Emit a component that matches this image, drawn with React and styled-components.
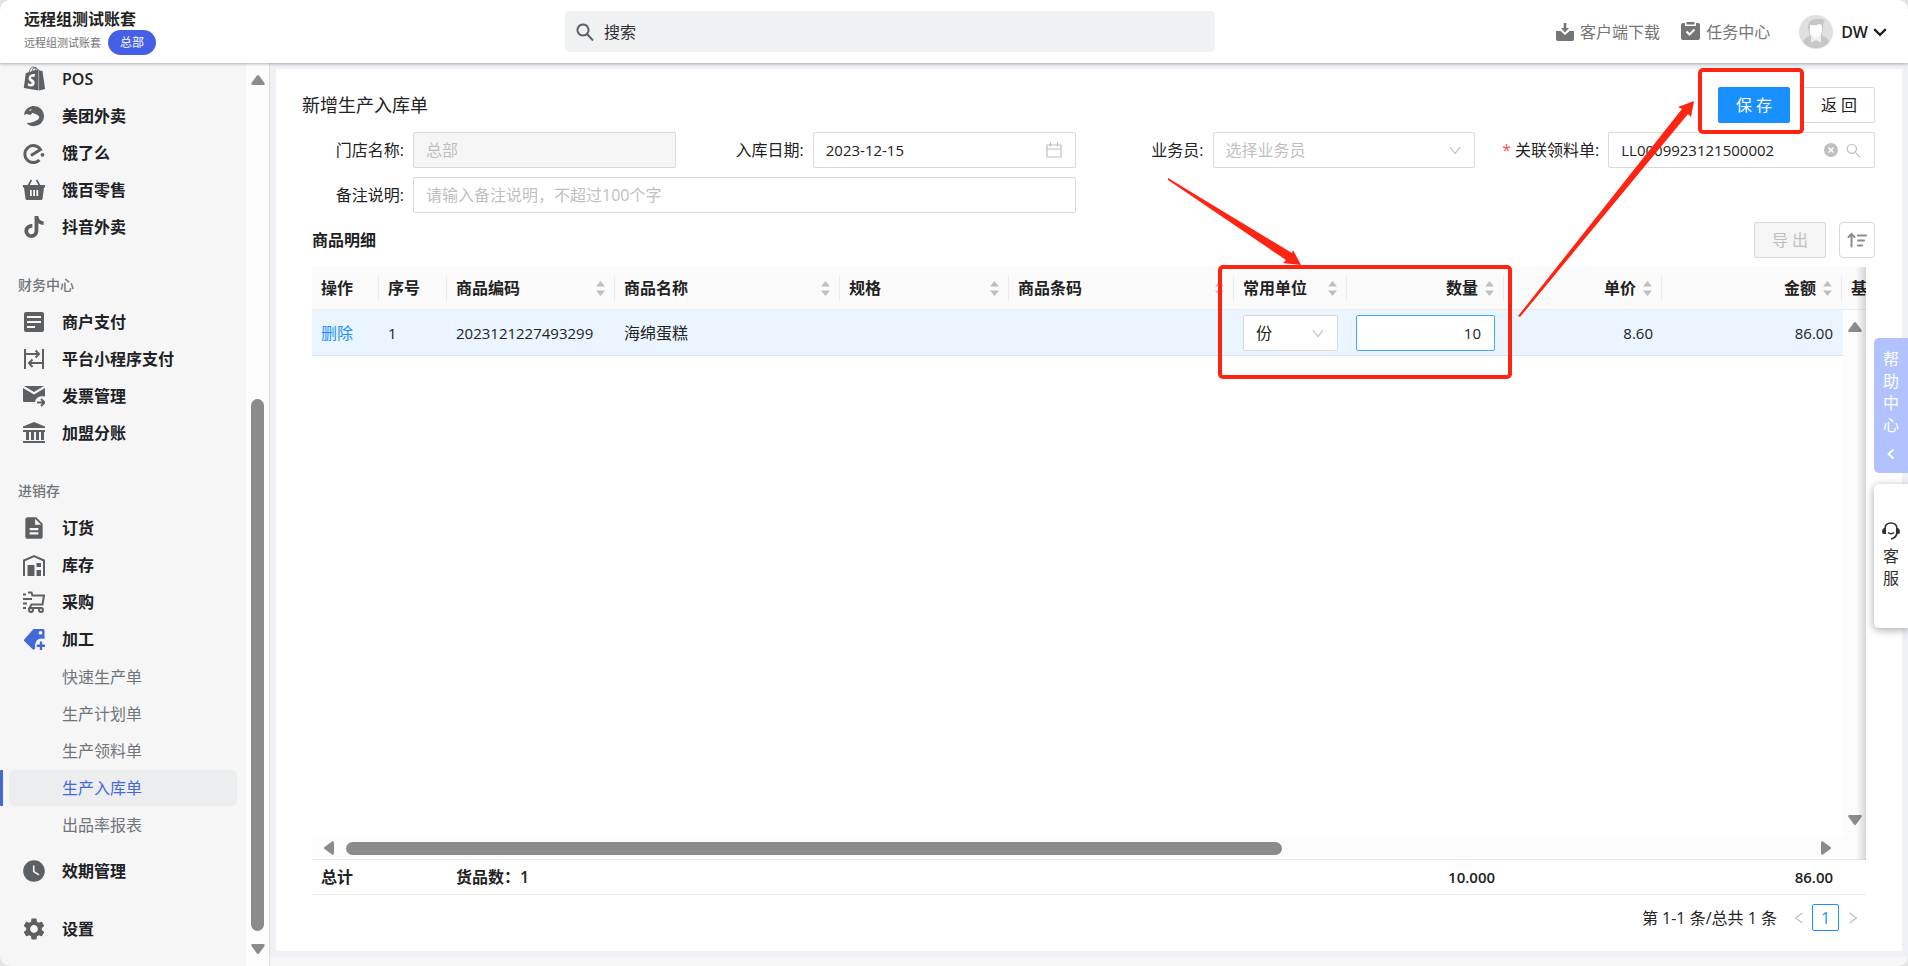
import React, { useState } from 'react'
import styled, { createGlobalStyle } from "styled-components";
import { FaShopify, FaTiktok } from "react-icons/fa6";
import { MdSettings, MdWatchLater, MdDescription } from "react-icons/md";

const GlobalStyle = createGlobalStyle`
    * {
        box-sizing: border-box;
    }

    body {
        margin: 0;
        background: #e4e4e4;
        color: #222222;
        font-family: "Open Sans", "Noto Sans CJK SC", sans-serif;
        font-size: 16px;
        line-height: 24px;
    }

    button, input, select {
        font: inherit;
        color: inherit;
    }
`;

const Page = styled.div`
    position: relative;
    display: flex;
    flex-direction: column;
    height: 100vh;
    overflow: hidden;
    background: #f6f6f6;
    border-radius: 10px;
`;

/* ---------- top bar ---------- */

const TopBar = styled.header`
    position: relative;
    z-index: 1;
    flex: none;
    display: grid;
    grid-template-columns: 565px minmax(200px, 650px) 1fr;
    align-items: center;
    height: 63px;
    background: #ffffff;
    box-shadow: 0 1px 3px rgba(0, 0, 0, 0.3);
`;

const Brand = styled.div`
    padding-left: 24px;

    h1 {
        margin: 0;
        font-size: 16px;
        line-height: 22px;
        font-weight: 600;
    }
`;

const BrandSub = styled.div`
    display: flex;
    align-items: center;
    gap: 7px;
    font-size: 11px;
    color: #757575;
`;

const Badge = styled.span`
    padding: 0 12px;
    border-radius: 13px;
    background: #4560e6;
    color: #ffffff;
    font-size: 12px;
    line-height: 25px;
`;

const SearchBox = styled.label`
    display: flex;
    align-items: center;
    gap: 10px;
    height: 41px;
    padding: 0 11px;
    border-radius: 5px;
    background: #f0f1f3;
    color: #5f6368;

    input {
        flex: 1;
        border: 0;
        padding: 0;
        outline: 0;
        background: none;

        &::placeholder {
            color: #303030;
            opacity: 1;
        }
    }
`;

const TopLinks = styled.nav`
    display: flex;
    justify-content: flex-end;
    align-items: center;
    padding-right: 21px;
    color: #757575;
`;

const TopLink = styled.a`
    display: flex;
    align-items: center;
    gap: 6px;
    margin-right: 21px;
    color: inherit;
    text-decoration: none;
`;

const UserButton = styled.button`
    display: flex;
    align-items: center;
    gap: 5px;
    margin-left: 8px;
    padding: 0;
    border: 0;
    background: none;
    color: #222222;
    font-weight: 600;

    span {
        margin-left: 3px;
    }
`;

/* ---------- side menu ---------- */

const Body = styled.div`
    flex: 1;
    display: flex;
    min-height: 0;
`;

const Sidebar = styled.aside`
    flex: none;
    display: flex;
    width: 270px;
    border-right: 1px solid #dcdee3;
`;

const Menu = styled.nav`
    flex: 1;
    margin-top: -3px;
`;

const GroupTitle = styled.div`
    padding: 22px 18px 0;
    height: 58px;
    font-size: 14px;
    line-height: 36px;
    font-weight: 500;
    color: #70757a;
`;

const MenuLink = styled.a`
    display: flex;
    align-items: center;
    gap: 17px;
    height: 37px;
    margin-top: ${props => props.$gap || 0}px;
    padding-left: 23px;
    color: #202124;
    font-weight: 600;
    text-decoration: none;

    svg {
        flex: none;
        color: ${props => props.$active ? "#4468d8" : "#5c6063"};
    }
`;

const Slot = styled.span`
    display: flex;
    justify-content: center;
    width: 22px;
`;

const SubMenu = styled.div`
    padding-top: 2px;
`;

const SubLink = styled.a`
    display: block;
    height: 36px;
    margin: 0 9px 1px 0;
    padding-left: 59px;
    border-left: 3px solid transparent;
    color: #70757a;
    line-height: 36px;
    text-decoration: none;

    &[aria-current="page"] {
        padding-left: 6px;
        border-left-color: #4468d8;
        border-radius: 1px;
        color: #4468d8;

        span {
            display: block;
            padding-left: 53px;
            border-radius: 5px;
            background: #ecedef;
        }
    }
`;

/* ---------- scroll bars ---------- */

const Scrollbar = styled.div`
    flex: none;
    display: flex;
    flex-direction: ${props => props.$horizontal ? "row" : "column"};
    align-items: center;
    justify-content: space-between;
    ${props => props.$horizontal ? "height: 22px" : "width: 23px"};
    padding: ${props => props.$pad || "12px"};
    background: #fcfcfc;

    svg {
        flex: none;
    }
`;

const SideTrack = styled.div`
    flex: 1;
    display: flex;
    flex-direction: column;
    justify-content: flex-end;
    width: 13px;
    padding-bottom: 11px;

    &::after {
        content: "";
        height: 63%;
        border-radius: 7px;
        background: #8b8b8b;
    }
`;

const BottomTrack = styled.div`
    flex: 1;
    padding: 0 10px;

    &::after {
        content: "";
        display: block;
        width: 64%;
        height: 13px;
        border-radius: 7px;
        background: #8b8b8b;
    }
`;

/* ---------- document panel ---------- */

const Main = styled.main`
    flex: 1;
    display: flex;
    min-width: 0;
    margin-bottom: 9px;
    padding: 6px;
    background: #f0f1f6;
`;

const Panel = styled.section`
    flex: 1;
    display: flex;
    flex-direction: column;
    gap: 9px;
    min-width: 0;
    padding: 18px 0 20px;
    border-radius: 2px;
    background: #ffffff;
`;

const PanelHead = styled.div`
    display: flex;
    align-items: center;
    gap: ${props => props.$gap};
    padding: 0 27px 0 ${props => props.$left};

    h2, h3 {
        flex: 1;
        margin: 0;
        font-size: 18px;
        font-weight: 400;
    }

    h3 {
        font-size: 16px;
        font-weight: 600;
    }
`;

const Button = styled.button`
    width: 72px;
    height: 36px;
    padding: 0;
    border: 1px solid ${props => props.$primary ? "#1890ff" : "#d9d9d9"};
    border-radius: 2px;
    background: ${props => props.$primary ? "#1890ff" : "#ffffff"};
    color: ${props => props.$primary ? "#ffffff" : "#222222"};

    &:disabled {
        background: #f5f5f5;
        color: #bfbfbf;
    }
`;

const IconButton = styled(Button)`
    display: flex;
    align-items: center;
    justify-content: center;
    width: 36px;
    border-radius: 4px;
    color: #8c8c8c;
`;

const Form = styled.form`
    display: grid;
    grid-template-columns: repeat(4, 1fr);
    gap: 9px 0;
    padding-right: 27px;
`;

const Field = styled.div`
    display: flex;
    align-items: center;
    grid-column: span ${props => props.$span || 1};

    label {
        width: ${props => props.$label || "137px"};
        padding-right: 9px;
        text-align: right;
        white-space: nowrap;
    }

    i {
        margin-right: 4px;
        color: #ff4d4f;
        font-style: normal;
    }
`;

const Control = styled.div`
    flex: 1;
    display: flex;
    align-items: center;
    gap: 8px;
    min-width: 0;
    height: 36px;
    padding: 0 13px 0 12px;
    border: 1px solid ${props => props.$focus ? "#40a9ff" : "#d9d9d9"};
    border-radius: 2px;
    background: ${props => props.$disabled ? "#f5f5f5" : "#ffffff"};
    color: #bfbfbf;

    input, select {
        flex: 1;
        width: 0;
        min-width: 0;
        padding: 0;
        border: 0;
        outline: 0;
        appearance: none;
        background: none;
        color: #222222;
        opacity: 1;
    }

    input {
        font-size: ${props => props.$text ? "16px" : "15px"};
        text-align: ${props => props.$align || "left"};
    }

    input:disabled, input::placeholder, select:invalid {
        color: #bfbfbf;
        opacity: 1;
    }
`;

/* ---------- goods table ---------- */

const TableBox = styled.div`
    position: relative;
    flex: 1;
    display: flex;
    flex-direction: column;
    min-height: 0;
    margin: 0 36px;
    overflow: hidden;
    border-bottom: 1px solid #ebebeb;
`;

const Table = styled.table`
    flex: none;
    table-layout: fixed;
    width: 1680px;
    border-collapse: separate;
    border-spacing: 0;

    th, td {
        height: ${props => props.$row};
        padding: 0 9px;
        text-align: left;
        white-space: nowrap;
    }

    thead th {
        background: #fafafa;
        border-bottom: 1px solid #ebebeb;
        font-weight: 600;
    }

    tbody td {
        background: #eaf5ff;
        border-bottom: 1px solid #dbe6ef;
    }

    tfoot td {
        border-top: 1px solid #ebebeb;
        font-weight: 600;
    }
`;

const HeadCell = styled.div`
    display: flex;
    align-items: center;
    justify-content: ${props => props.$right ? "flex-end" : "space-between"};
    gap: 7px;
    height: 25px;
    margin-right: -9px;
    padding-right: 9px;
    border-right: 1px solid #ebebeb;
`;

const Num = styled.div`
    font-size: 15px;
    text-align: ${props => props.$right ? "right" : "left"};
`;

const RowLink = styled.a`
    color: #1890ff;
    text-decoration: none;
`;

const Rows = styled.div`
    flex: 1;
    display: flex;
    min-height: 0;
`;

const Viewport = styled.div`
    flex: 1;
    min-width: 0;
    overflow: hidden;
`;

const EdgeShade = styled.div`
    position: absolute;
    top: 0;
    right: 0;
    bottom: 34px;
    width: 10px;
    background: linear-gradient(to left, rgba(0, 0, 0, 0.15), rgba(0, 0, 0, 0));
    pointer-events: none;
`;

const BottomBar = styled.div`
    display: flex;
    background: #fcfcfc;

    > div {
        flex: 1;
        margin-right: 23px;
    }
`;

const Pager = styled.div`
    display: flex;
    align-items: center;
    justify-content: flex-end;
    padding: 0 36px;

    > span {
        margin-right: 8px;
    }
`;

const PageButton = styled.button`
    display: flex;
    align-items: center;
    justify-content: center;
    width: 27px;
    height: 27px;
    padding: 0;
    border: 1px solid ${props => props.$current ? "#1890ff" : "transparent"};
    border-radius: 2px;
    background: none;
    color: ${props => props.$current ? "#1890ff" : "#bfbfbf"};
    font-weight: 500;
`;

/* ---------- things that float over the page ---------- */

const SideTabs = styled.div`
    position: absolute;
    z-index: 2;
    top: 338px;
    right: 0;
    display: flex;
    flex-direction: column;
    gap: 11px;
    width: 34px;
`;

const SideTab = styled.button`
    display: flex;
    flex-direction: column;
    align-items: center;
    justify-content: center;
    height: ${props => props.$height};
    padding: 0 0 4px;
    border: 0;
    border-radius: 5px 0 0 5px;
    background: ${props => props.$help ? "#b2c1ff" : "#ffffff"};
    box-shadow: ${props => props.$help ? "none" : "0 2px 8px rgba(0, 0, 0, 0.35)"};
    color: ${props => props.$help ? "#ffffff" : "#303030"};
    line-height: 22px;

    span {
        width: 16px;
        overflow-wrap: anywhere;
    }

    svg {
        margin: ${props => props.$help ? "12px 0 0" : "2px 0 5px"};
    }
`;

const Marks = styled.svg`
    position: absolute;
    z-index: 3;
    top: 0;
    left: 0;
    pointer-events: none;
`;

/* ---------- icons ---------- */

const Icon = ({ size = 22, box = 22, children }) => (
    <svg width={size} height={size} viewBox={`0 0 ${box} ${box}`} fill="currentColor" aria-hidden="true">
        {children}
    </svg>
)

const line = { fill: "none", stroke: "currentColor", strokeWidth: 2 };

const MeituanIcon = () => (
    <Icon>
        <path d="M1.500 7.500C3 3.500 7 1 11 1a10 10 0 0 1 0 20.200c-3 0-5.500-1-7.500-3.200 4 .2 9-1.500 11.500-3.500 2-1.800 1.500-3.700-1-4.800L9.500 7.800l-2 2.200-4-1-2.500 1Z" />
        <path fill="#f6f6f6" d="M5.500 5.500l3-1.500-.5 1.700Z" />
    </Icon>
)

const ElemeIcon = () => (
    <Icon>
        <path {...line} strokeWidth="3" d="M8 13.500 17.500 7.500A8.500 8.500 0 1 0 16.500 18" />
        <circle cx="19.500" cy="12.800" r="1.900" />
    </Icon>
)

const BasketIcon = () => (
    <Icon>
        <path {...line} strokeWidth="1.600" d="M5 7l3.500-6M17 7 13.500 1" />
        <path fillRule="evenodd" d="M0 6h22v2.500h-1L19.500 20q-.3 1-1.500 1H4q-1.200 0-1.500-1L1 8.500H0ZM7 11v6h1.800v-6Zm3.200 0v6H12v-6Zm3.200 0v6h1.800v-6Z" />
    </Icon>
)

const ArticleIcon = () => (
    <Icon>
        <path fillRule="evenodd" d="M3 1h16q2 0 2 2v16q0 2-2 2H3q-2 0-2-2V3q0-2 2-2Zm1 4v2h14V5Zm0 5v2h14v-2Zm0 5v2h8v-2Z" />
    </Icon>
)

const ExchangeIcon = () => (
    <Icon>
        <path {...line} d="M2 1v20M20 1v20M2 6h14M12.500 2.500 16 6l-3.500 3.500M20 15H6M9.500 11.500 6 15l3.500 4" />
    </Icon>
)

const InvoiceIcon = () => (
    <Icon>
        <path d="M1 1h20L11 7ZM0 3l11 6.500L22 3v8.500q-9-1-10 5.500H1q-1 0-1-1Z" />
        <path {...line} d="M14 17.500h7M18 14l3.500 3.500L18 21" />
    </Icon>
)

const BankIcon = () => (
    <Icon>
        <path d="M11 0 22 4.500V6H0V4.500ZM0 8h22v2h-1v8h-3v-8h-2v8h-3v-8h-2v8H8v-8H6v8H3v-8H0ZM0 19h22v2H0Z" />
    </Icon>
)

const WarehouseIcon = () => (
    <Icon>
        <path {...line} d="M1 22V6.500L11 2l10 4.500V22" />
        <path d="M4.500 11h7v11h-7ZM13.500 9h4.500v4h-4.500ZM13.500 16h4.500v6h-4.500Z" />
    </Icon>
)

const CartIcon = () => (
    <Icon>
        <path {...line} d="M5 1.500h3.500l1 3H21l-1.500 9H8.500l-2 3.500H19M0 3.500h3M0 8h9M0 12.500h4M0 17h3" />
        <circle {...line} cx="8" cy="19" r="2" />
        <circle {...line} cx="18" cy="19" r="2" />
    </Icon>
)

const TagIcon = () => (
    <Icon>
        <path fillRule="evenodd" d="M10.500 1H20q1.500 0 1.500 1.500V11q-8-2-9.500 6l.2 3.500L11 21.500q-.8.400-1.600-.4L1.200 13q-.6-.8 0-1.600ZM17.500 3a1.800 1.800 0 1 0 .01 0Z" />
        <path {...line} strokeWidth="2.400" d="M18 13.500V22M13.700 17.800H22.300" />
    </Icon>
)

const SearchIcon = ({ size, width }) => (
    <Icon size={size} box={18}>
        <path {...line} strokeWidth={width} d="M11.500 11.500 17 17.500M7 1.500a5.500 5.500 0 1 0 .01 0Z" />
    </Icon>
)

const Chevron = ({ size = 12, width = 1.2, d = "M1 3l5 6.500L11 3" }) => (
    <Icon size={size} box={12}><path {...line} strokeWidth={width} d={d} /></Icon>
)

const LEFT = "M8.500 1.500 3.500 6l5 4.500";
const WIDE_LEFT = "M9.500 1 2.500 6l7 5";
const WIDE_RIGHT = "M2.500 1 9.500 6l-7 5";

const DownloadIcon = () => (
    <Icon size={18} box={18}>
        <path d="M0 8h4.500l4.500 4 4.500-4H18v8q0 2-2 2H2q-2 0-2-2Z" />
        <path d="M7.700 0h2.600v5H13L9 9.500 5 5h2.700Z" />
    </Icon>
)

const TaskIcon = () => (
    <Icon size={19} box={19}>
        <path d="M2 1h2v3h11V1h2q2 0 2 2v13q0 2-2 2H2q-2 0-2-2V3q0-2 2-2Z" />
        <path d="M5.500 0h8v2.500h-8Z" />
        <path {...line} stroke="#ffffff" d="M5.500 9.500 8.500 12.500l5-5" />
    </Icon>
)

const Avatar = () => (
    <Icon size={34} box={34}>
        <circle cx="17" cy="17" r="17" fill="#e0e0e0" />
        <path fill="#c6c6c6" d="M9 13q-1-9 9-9 3-1 8 1-2 2-2 9l-1 7q6 1 7 6a17 17 0 0 1-26 0q2-5 7-6Z" />
        <path fill="#ffffff" d="M11 10q6 1 9-1 2 0 3 2v6q-1 4-3 5v3l-3-1-4 2v-4q-2-2-2-5Z" />
        <path fill="#eeeeee" d="M12 20l5 3 5-3v8l-5-3-5 3Z" />
    </Icon>
)

const CalendarIcon = () => (
    <Icon size={16} box={16}>
        <path {...line} strokeWidth="1.200" d="M1 3h14v12H1ZM1 7h14M4.500 0v4.500M11.500 0v4.500" />
    </Icon>
)

const ClearIcon = () => (
    <Icon size={14} box={14}>
        <circle cx="7" cy="7" r="7" />
        <path {...line} stroke="#ffffff" strokeWidth="1.500" d="M4.500 4.500l5 5M9.500 4.500l-5 5" />
    </Icon>
)

const SortIcon = () => (
    <Icon size={20} box={20}>
        <path {...line} strokeLinecap="round" d="M4.500 16.500V4M1.500 7l3-3 3 3M11 5.500h8M11 10.500h6M11 15.500h4" />
    </Icon>
)

const HeadsetIcon = () => (
    <Icon size={18} box={18}>
        <path {...line} strokeWidth="1.600" d="M3 7C3 3 5.500 1 9 1s6 2 6 6v4q-1 5-6 6M6 10.500q3 2.500 6 0" />
        <path d="M4 6v6H2Q0 12 0 9.500T2 6ZM14 6v6h2q2 0 2-2.500T16 6Z" />
    </Icon>
)

const Sorter = () => (
    <svg width="9" height="15" viewBox="0 0 9 15" fill="#bfbfbf" aria-hidden="true">
        <path d="M4.500 0 9 5.500H0ZM0 9.500h9L4.500 15Z" />
    </svg>
)

const Arrow = ({ turn = 0 }) => (
    <svg width="14" height="14" viewBox="0 0 14 14" fill="#8b8b8b" aria-hidden="true">
        <path transform={`rotate(${turn} 7 7)`} d="M6 2.500q1-1 2 0l5.500 7.500q.8 2-1 2h-11q-1.800 0-1-2Z" />
    </svg>
)

/* ---------- data ---------- */

const menu = [
    {
        items: [
            { text: "POS", icon: <FaShopify size={25} /> },
            { text: "美团外卖", icon: <MeituanIcon /> },
            { text: "饿了么", icon: <ElemeIcon /> },
            { text: "饿百零售", icon: <BasketIcon /> },
            { text: "抖音外卖", icon: <FaTiktok size={22} /> },
        ],
    },
    {
        title: "财务中心",
        items: [
            { text: "商户支付", icon: <ArticleIcon /> },
            { text: "平台小程序支付", icon: <ExchangeIcon /> },
            { text: "发票管理", icon: <InvoiceIcon /> },
            { text: "加盟分账", icon: <BankIcon /> },
        ],
    },
    {
        title: "进销存",
        items: [
            { text: "订货", icon: <MdDescription size={26} /> },
            { text: "库存", icon: <WarehouseIcon /> },
            { text: "采购", icon: <CartIcon /> },
            {
                text: "加工",
                icon: <TagIcon />,
                active: true,
                children: ["快速生产单", "生产计划单", "生产领料单", "生产入库单", "出品率报表"],
            },
            { text: "效期管理", icon: <MdWatchLater size={26} />, gap: 9 },
            { text: "设置", icon: <MdSettings size={26} />, gap: 21 },
        ],
    },
];

const columns = [
    { title: "操作", width: 67 },
    { title: "序号", width: 68 },
    { title: "商品编码", width: 168, sort: true },
    { title: "商品名称", width: 225, sort: true },
    { title: "规格", width: 169, sort: true },
    { title: "商品条码", width: 225, sort: true },
    { title: "常用单位", width: 113, sort: true },
    { title: "数量", width: 157, sort: true, right: true },
    { title: "单价", width: 158, sort: true, right: true },
    { title: "金额", width: 180, sort: true, right: true },
    { title: "基", width: 150 },
];

const Cols = () => (
    <colgroup>
        {columns.map(col => <col key={col.title} width={col.width} />)}
    </colgroup>
)

function SideMenu() {
    return (
        <Sidebar>
            <Menu>
                {menu.map((group, i) => (
                    <React.Fragment key={i}>
                        {group.title && <GroupTitle>{group.title}</GroupTitle>}
                        {group.items.map(item => (
                            <React.Fragment key={item.text}>
                                <MenuLink href="#" $active={item.active} $gap={item.gap}>
                                    <Slot>{item.icon}</Slot>
                                    {item.text}
                                </MenuLink>
                                {item.children && (
                                    <SubMenu>
                                        {item.children.map(text => (
                                            <SubLink key={text} href="#" aria-current={text === "生产入库单" ? "page" : undefined}>
                                                <span>{text}</span>
                                            </SubLink>
                                        ))}
                                    </SubMenu>
                                )}
                            </React.Fragment>
                        ))}
                    </React.Fragment>
                ))}
            </Menu>
            <Scrollbar $pad="10px 0">
                <Arrow />
                <SideTrack />
                <Arrow turn={180} />
            </Scrollbar>
        </Sidebar>
    )
}

function Header() {
    return (
        <TopBar>
            <Brand>
                <h1>远程组测试账套</h1>
                <BrandSub>远程组测试账套<Badge>总部</Badge></BrandSub>
            </Brand>
            <SearchBox>
                <SearchIcon size={18} width={2} />
                <input type="text" placeholder="搜索" aria-label="搜索" />
            </SearchBox>
            <TopLinks>
                <TopLink href="#"><DownloadIcon />客户端下载</TopLink>
                <TopLink href="#"><TaskIcon />任务中心</TopLink>
                <UserButton type="button">
                    <Avatar />
                    <span>DW</span>
                    <Chevron size={14} width={2} d="M1 3.500l5 5 5-5" />
                </UserButton>
            </TopLinks>
        </TopBar>
    )
}

function OrderForm() {
    const [date, setDate] = useState("2023-12-15");
    const [order, setOrder] = useState("LL0009923121500002");

    return (
        <Form>
            <Field>
                <label htmlFor="store">门店名称:</label>
                <Control $disabled $text><input id="store" value="总部" disabled /></Control>
            </Field>
            <Field>
                <label htmlFor="date">入库日期:</label>
                <Control>
                    <input id="date" value={date} onChange={e => setDate(e.target.value)} />
                    <CalendarIcon />
                </Control>
            </Field>
            <Field>
                <label htmlFor="clerk">业务员:</label>
                <Control>
                    <select id="clerk" required defaultValue="">
                        <option value="">选择业务员</option>
                    </select>
                    <Chevron />
                </Control>
            </Field>
            <Field $label="133px">
                <label htmlFor="order"><i>*</i>关联领料单:</label>
                <Control>
                    <input id="order" value={order} onChange={e => setOrder(e.target.value)} />
                    <ClearIcon />
                    <SearchIcon size={15} width={1.400} />
                </Control>
            </Field>
            <Field $span={2}>
                <label htmlFor="note">备注说明:</label>
                <Control $text><input id="note" placeholder="请输入备注说明，不超过100个字" /></Control>
            </Field>
        </Form>
    )
}

function GoodsTable() {
    const [amount, setAmount] = useState("10");

    return (
        <TableBox>
            <Table $row="43px">
                <Cols />
                <thead>
                    <tr>
                        {columns.map(col => (
                            <th key={col.title}>
                                <HeadCell $right={col.right}>
                                    {col.title}
                                    {col.sort && <Sorter />}
                                </HeadCell>
                            </th>
                        ))}
                    </tr>
                </thead>
            </Table>
            <Rows>
                <Viewport>
                    <Table $row="46px">
                        <Cols />
                        <tbody>
                            <tr>
                                <td><RowLink href="#">删除</RowLink></td>
                                <td><Num>1</Num></td>
                                <td><Num>2023121227493299</Num></td>
                                <td>海绵蛋糕</td>
                                <td></td>
                                <td></td>
                                <td>
                                    <Control>
                                        <select aria-label="常用单位" defaultValue="份"><option>份</option></select>
                                        <Chevron />
                                    </Control>
                                </td>
                                <td>
                                    <Control $focus $align="right">
                                        <input aria-label="数量" value={amount} onChange={e => setAmount(e.target.value)} />
                                    </Control>
                                </td>
                                <td><Num $right>8.60</Num></td>
                                <td><Num $right>86.00</Num></td>
                                <td></td>
                            </tr>
                        </tbody>
                    </Table>
                </Viewport>
                <Scrollbar $pad="10px 0">
                    <Arrow />
                    <Arrow turn={180} />
                </Scrollbar>
            </Rows>
            <BottomBar>
                <Scrollbar $horizontal $pad="0 10px">
                    <Arrow turn={-90} />
                    <BottomTrack />
                    <Arrow turn={90} />
                </Scrollbar>
            </BottomBar>
            <Table $row="35px">
                <Cols />
                <tfoot>
                    <tr>
                        <td colSpan={2}>总计</td>
                        <td colSpan={5}>货品数：1</td>
                        <td><Num $right>10.000</Num></td>
                        <td></td>
                        <td><Num $right>86.00</Num></td>
                        <td></td>
                    </tr>
                </tfoot>
            </Table>
            <EdgeShade />
        </TableBox>
    )
}

function App() {
    return (
        <Page>
            <GlobalStyle />
            <Header />
            <Body>
                <SideMenu />
                <Main>
                    <Panel>
                        <PanelHead $left="26px" $gap="13px">
                            <h2>新增生产入库单</h2>
                            <Button type="button" $primary>保 存</Button>
                            <Button type="button">返 回</Button>
                        </PanelHead>
                        <OrderForm />
                        <PanelHead $left="36px" $gap="13px">
                            <h3>商品明细</h3>
                            <Button type="button" disabled>导 出</Button>
                            <IconButton type="button" aria-label="排序"><SortIcon /></IconButton>
                        </PanelHead>
                        <GoodsTable />
                        <Pager>
                            <span>第 1-1 条/总共 1 条</span>
                            <PageButton type="button" aria-label="上一页"><Chevron d={WIDE_LEFT} /></PageButton>
                            <PageButton type="button" $current>1</PageButton>
                            <PageButton type="button" aria-label="下一页"><Chevron d={WIDE_RIGHT} /></PageButton>
                        </Pager>
                    </Panel>
                </Main>
            </Body>
            <SideTabs>
                <SideTab type="button" $help $height="135px">
                    <span>帮助中心</span>
                    <Chevron width={1.800} d={LEFT} />
                </SideTab>
                <SideTab type="button" $height="144px">
                    <HeadsetIcon />
                    <span>客服</span>
                </SideTab>
            </SideTabs>
            <Marks width="1908" height="966" viewBox="0 0 1908 966" fill="#ff2312" aria-hidden="true">
                <g fill="none" stroke="#ff2312" strokeWidth="4">
                    <rect x="1220" y="267" width="290" height="110" rx="3" />
                    <rect x="1700" y="70" width="102" height="62" rx="3" />
                </g>
                <path d="M1168 178 1292 253 1293 250 1301 265 1283 263 1286 260 1168 180Z" />
                <path d="M1518 316 1682 109 1678 107 1694 101 1691 117 1688 114 1520 317Z" />
            </Marks>
        </Page>
    )
}

export default App
